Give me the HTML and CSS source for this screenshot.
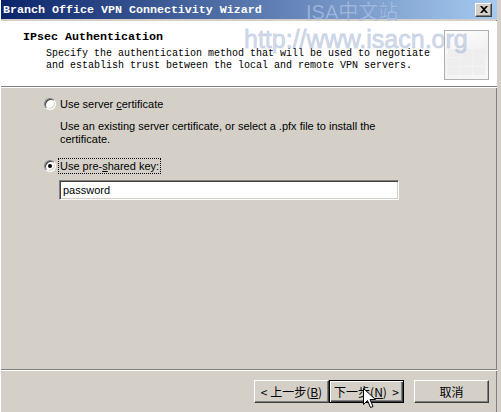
FILE: index.html
```html
<!DOCTYPE html>
<html>
<head>
<meta charset="utf-8">
<link rel="stylesheet" href="styles.css">
</head>
<body>
<div class="window">
  <div class="titlebar">
    <span class="title">Branch Office VPN Connectivity Wizard</span>
    <span class="close">
      <svg width="8" height="7" viewBox="0 0 8 7"><path d="M0 0h2l2 2 2-2h2L5 3.5 8 7H6L4 5 2 7H0l3-3.5z" fill="#000"/></svg>
    </span>
  </div>
  <div class="header">
    <div class="header-text">
      <div class="heading">IPsec Authentication</div>
      <div class="subtext">Specify the authentication method that will be used to negotiate<br>and establish trust between the local and remote VPN servers.</div>
    </div>
    <div class="header-art">
      <div class="art-row"><span></span><span></span><span></span></div>
      <div class="art-row"><span></span><span></span><span></span></div>
      <div class="art-row"><span></span><span></span><span></span></div>
    </div>
  </div>
  <div class="rule"></div>
  <div class="content">
    <label class="option">
      <span class="radio"></span>
      <span>Use server <u>c</u>ertificate</span>
    </label>
    <p class="note">Use an existing server certificate, or select a .pfx file to install the certificate.</p>
    <label class="option">
      <span class="radio checked"></span>
      <span class="focus">Use pre-<u>s</u>hared key:</span>
    </label>
    <div class="textbox">password</div>
  </div>
  <div class="rule"></div>
  <div class="buttons">
    <button class="btn">&lt;&nbsp;上一步(<u>B</u>)</button>
    <button class="btn default"><span>下一步(<u>N</u>)&nbsp;&nbsp;&gt;</span></button>
    <button class="btn cancel">取消</button>
  </div>

  <div class="mark mark-cn">ISA中文站</div>
  <div class="mark mark-url">http://www.isacn.org</div>
  <svg class="cursor" width="13" height="21" viewBox="0 0 13 21">
    <path d="M0.5 0.5v16l4-4 3 7 2.5-1-3-7h5.5z" fill="#fff" stroke="#000" stroke-width="1"/>
  </svg>
</div>
</body>
</html>
```
FILE: styles.css
```css
html, body {
  margin: 0;
  padding: 0;
}

body {
  width: 501px;
  height: 412px;
  overflow: hidden;
  background: #d4d0c8;
  font-family: Tahoma, "Liberation Sans", Arial, sans-serif;
  font-size: 11px;
  color: #000;
}

.window {
  position: relative;
  width: 501px;
  height: 412px;
  box-sizing: border-box;
  border-left: 1px solid #fff;
  border-right: 4px solid #d4d0c8;
  box-shadow: inset -1px 0 0 #808080;
  display: flex;
  flex-direction: column;
}

.titlebar {
  height: 19px;
  flex: none;
  background: linear-gradient(to right, #0a246a, #a6caf0);
  display: flex;
  align-items: center;
  justify-content: space-between;
  padding: 0 5px 0 2px;
  border-bottom: 1px solid #d4d0c8;
}

.title {
  color: #fff;
  font-family: "Liberation Mono", "DejaVu Sans Mono", monospace;
  font-weight: bold;
  font-size: 11.67px;
  white-space: nowrap;
}

.close {
  width: 17px;
  height: 14px;
  box-sizing: border-box;
  background: #d4d0c8;
  border: 1px solid;
  border-color: #fff #404040 #404040 #fff;
  box-shadow: inset -1px -1px 0 #808080;
  display: flex;
  align-items: center;
  justify-content: center;
}

.header {
  height: 65px;
  flex: none;
  background: #fff;
  display: flex;
  justify-content: space-between;
  padding: 0 8px 0 22px;
  margin-top: 1px;
}

.header-text {
  padding-top: 10px;
  font-family: "Liberation Mono", "DejaVu Sans Mono", monospace;
}

.heading {
  font-weight: bold;
  font-size: 11.67px;
  line-height: 13px;
}

.subtext {
  font-size: 10px;
  line-height: 12px;
  margin: 4px 0 0 23px;
}

.header-art {
  align-self: center;
  width: 45px;
  height: 50px;
  margin-top: 2px;
  box-sizing: border-box;
  border: 1px solid #b0b0b0;
  background: linear-gradient(160deg, #ffffff 0%, #f0f0f0 55%, #f8f8f8 100%);
  display: flex;
  flex-direction: column;
  justify-content: flex-end;
  padding: 4px 3px;
  gap: 1px;
}

.art-row {
  display: flex;
  gap: 1px;
}

.art-row span {
  flex: 1;
  height: 8px;
  background: #eeeeee;
}

.rule {
  flex: none;
  height: 0;
  border-top: 1px solid #808080;
  border-bottom: 1px solid #fff;
}

.content {
  flex: 1;
  padding: 8px 0 0 43px;
}

.option {
  display: flex;
  align-items: center;
  gap: 4px;
  height: 15px;
}

.radio {
  width: 12px;
  height: 12px;
  box-sizing: border-box;
  border-radius: 50%;
  background: #fff;
  border: 1px solid;
  border-color: #808080 #fff #fff #808080;
  box-shadow: inset 1px 1px 0 #404040, inset -1px -1px 0 #d4d0c8;
  position: relative;
}

.radio.checked::after {
  content: "";
  position: absolute;
  left: 3px;
  top: 3px;
  width: 4px;
  height: 4px;
  border-radius: 50%;
  background: #000;
}

.focus {
  outline: 1px dotted #000;
  outline-offset: 1px;
}

.note {
  margin: 9px 0 0 16px;
  width: 330px;
  line-height: 13px;
}

.option + .note + .option {
  margin-top: 12px;
}

.textbox {
  margin: 7px 0 0 15px;
  width: 340px;
  height: 20px;
  box-sizing: border-box;
  background: #fff;
  border: 1px solid;
  border-color: #808080 #fff #fff #808080;
  box-shadow: inset 1px 1px 0 #404040, inset -1px -1px 0 #d4d0c8;
  padding: 2px 3px;
  line-height: 15px;
}

.buttons {
  height: 32px;
  flex: none;
  display: flex;
  align-items: flex-start;
  padding: 9px 0 0 253px;
}

.btn {
  width: 75px;
  height: 23px;
  box-sizing: border-box;
  background: #d4d0c8;
  font-family: "Noto Sans CJK SC", "Liberation Sans", sans-serif;
  font-size: 12px;
  line-height: 1;
  padding: 0;
  border: 1px solid;
  border-color: #fff #404040 #404040 #fff;
  box-shadow: inset -1px -1px 0 #808080;
  display: flex;
  align-items: center;
  justify-content: center;
}

.btn.default {
  border: 1px solid #000;
  box-shadow: inset 1px 1px 0 #fff, inset -1px -1px 0 #404040, inset -2px -2px 0 #808080;
}

.btn.cancel {
  margin-left: 10px;
}

.mark {
  position: absolute;
  font-family: "Liberation Sans", "Noto Sans CJK SC", sans-serif;
  white-space: nowrap;
  pointer-events: none;
}

.mark-cn {
  left: 305px;
  top: 1px;
  font-size: 20px;
  line-height: 22px;
  color: rgba(200, 218, 245, 0.6);
  -webkit-text-stroke: 1px rgba(110, 140, 195, 0.3);
}

.mark-url {
  left: 243px;
  top: 25px;
  font-size: 25px;
  line-height: 28px;
  color: rgba(150, 168, 205, 0.4);
  -webkit-text-stroke: 1px rgba(170, 185, 215, 0.45);
}

.cursor {
  position: absolute;
  left: 362px;
  top: 388px;
}
```
